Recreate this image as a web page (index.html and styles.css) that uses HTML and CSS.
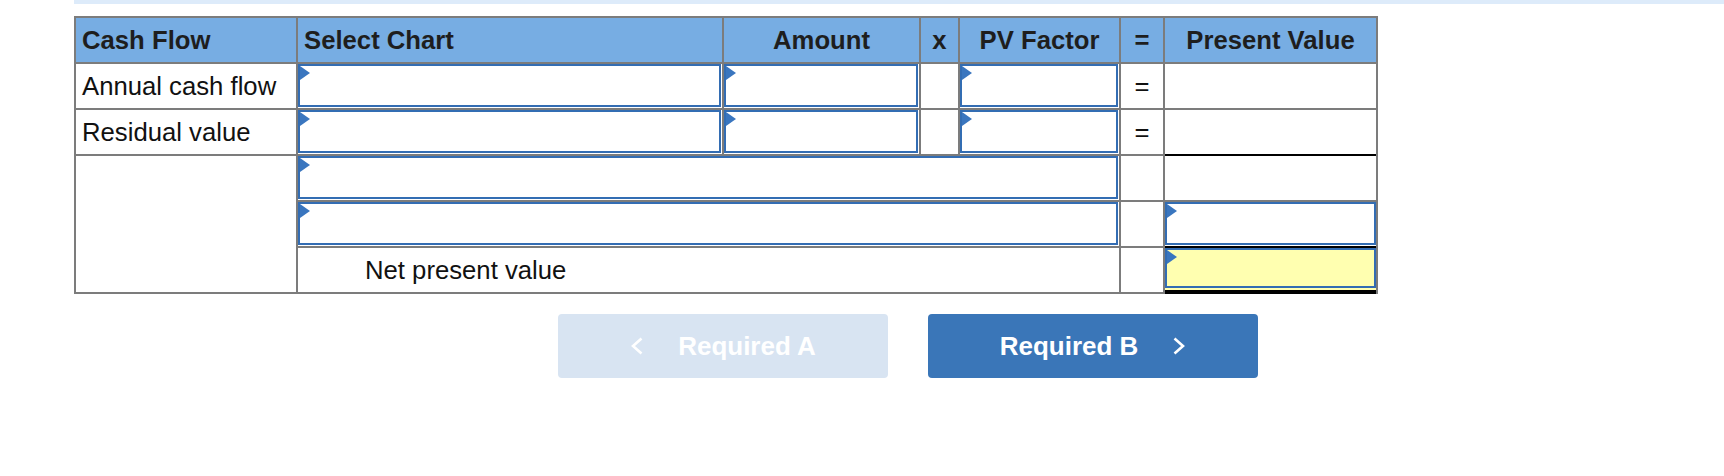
FILE: index.html
```html
<!DOCTYPE html>
<html>
<head>
<meta charset="utf-8">
<link rel="stylesheet" href="styles.css">
</head>
<body>
<div class="topbar"></div>
<div class="sheet">
  <div class="hd">Cash Flow</div>
  <div class="hd">Select Chart</div>
  <div class="hd c">Amount</div>
  <div class="hd c">x</div>
  <div class="hd c">PV Factor</div>
  <div class="hd c">=</div>
  <div class="hd c">Present Value</div>

  <div class="cell lbl">Annual cash flow</div>
  <div class="cell top"><div class="inp"></div></div>
  <div class="cell top"><div class="inp"></div></div>
  <div class="cell"></div>
  <div class="cell top"><div class="inp"></div></div>
  <div class="cell c">=</div>
  <div class="cell"></div>

  <div class="cell lbl">Residual value</div>
  <div class="cell top"><div class="inp"></div></div>
  <div class="cell top"><div class="inp"></div></div>
  <div class="cell"></div>
  <div class="cell top"><div class="inp"></div></div>
  <div class="cell c">=</div>
  <div class="cell rule"></div>

  <div class="cell tall"></div>
  <div class="cell top wide"><div class="inp"></div></div>
  <div class="cell"></div>
  <div class="cell"></div>

  <div class="cell top wide"><div class="inp"></div></div>
  <div class="cell"></div>
  <div class="cell top rule"><div class="inp full"></div></div>

  <div class="cell wide npv">Net present value</div>
  <div class="cell"></div>
  <div class="cell top total"><div class="inp full yellow"></div></div>
</div>
<div class="nav">
  <div class="btn prev">
    <svg class="chev" width="14" height="18" viewBox="0 0 14 18"><polyline points="11.5,1.5 3,9 11.5,16.5" fill="none" stroke="#fff" stroke-width="2.6"/></svg>
    <span>Required A</span>
  </div>
  <div class="btn next">
    <span>Required B</span>
    <svg class="chev" width="14" height="18" viewBox="0 0 14 18"><polyline points="2.5,1.5 11,9 2.5,16.5" fill="none" stroke="#fff" stroke-width="2.6"/></svg>
  </div>
</div>
</body>
</html>
```

FILE: styles.css
```css
html, body {
  margin: 0;
  padding: 0;
  background: #fff;
}
body {
  font-family: "Liberation Sans", Arial, Helvetica, sans-serif;
}
.topbar {
  margin-left: 74px;
  height: 4px;
  background: #ddebfa;
}
.sheet {
  margin: 12px 0 0 74px;
  display: grid;
  grid-template-columns: 220px 424px 195px 37px 159px 42px 211px;
  grid-template-rows: repeat(6, 44px);
  gap: 2px;
  padding: 2px;
  width: max-content;
  background: #7c7c7c;
  font-size: 25.7px;
}
.hd {
  background: #77ade3;
  color: #1e1e1e;
  font-weight: bold;
  display: flex;
  align-items: center;
  padding-left: 6px;
  white-space: nowrap;
}
.hd.c {
  justify-content: center;
  padding-left: 0;
}
.cell {
  background: #fff;
  color: #111;
  display: flex;
  align-items: center;
  white-space: nowrap;
}
.cell.lbl {
  padding-left: 6px;
}
.cell.c {
  justify-content: center;
}
.cell.top {
  align-items: flex-start;
}
.cell.wide {
  grid-column: span 4;
}
.cell.tall {
  grid-row: span 3;
}
.cell.npv {
  padding-left: 67px;
}
.cell.rule {
  box-shadow: 0 2px 0 #000;
}
.cell.total {
  background: #ffffb0;
  box-shadow: inset 0 -2px 0 #000, 0 2px 0 #000;
}
.inp {
  position: relative;
  box-sizing: border-box;
  width: calc(100% - 1px);
  height: 43px;
  border: 2px solid #336db3;
  background: #fff;
}
.inp.full {
  width: 100%;
}
.inp.yellow {
  height: 40px;
  background: #ffffb0;
}
.inp::before {
  content: "";
  position: absolute;
  left: 0;
  top: 0;
  width: 0;
  height: 0;
  border-left: 10px solid #3a76bf;
  border-top: 7px solid transparent;
  border-bottom: 7px solid transparent;
}
.nav {
  margin: 20px 0 0 558px;
  display: flex;
  gap: 40px;
}
.btn {
  width: 330px;
  height: 64px;
  border-radius: 4px;
  display: flex;
  align-items: center;
  justify-content: center;
  gap: 34px;
  color: #fff;
  font-weight: bold;
  font-size: 26px;
}
.btn.prev {
  background: #d8e4f2;
}
.btn.next {
  background: #3a76b8;
}
.chev {
  display: block;
}
```
